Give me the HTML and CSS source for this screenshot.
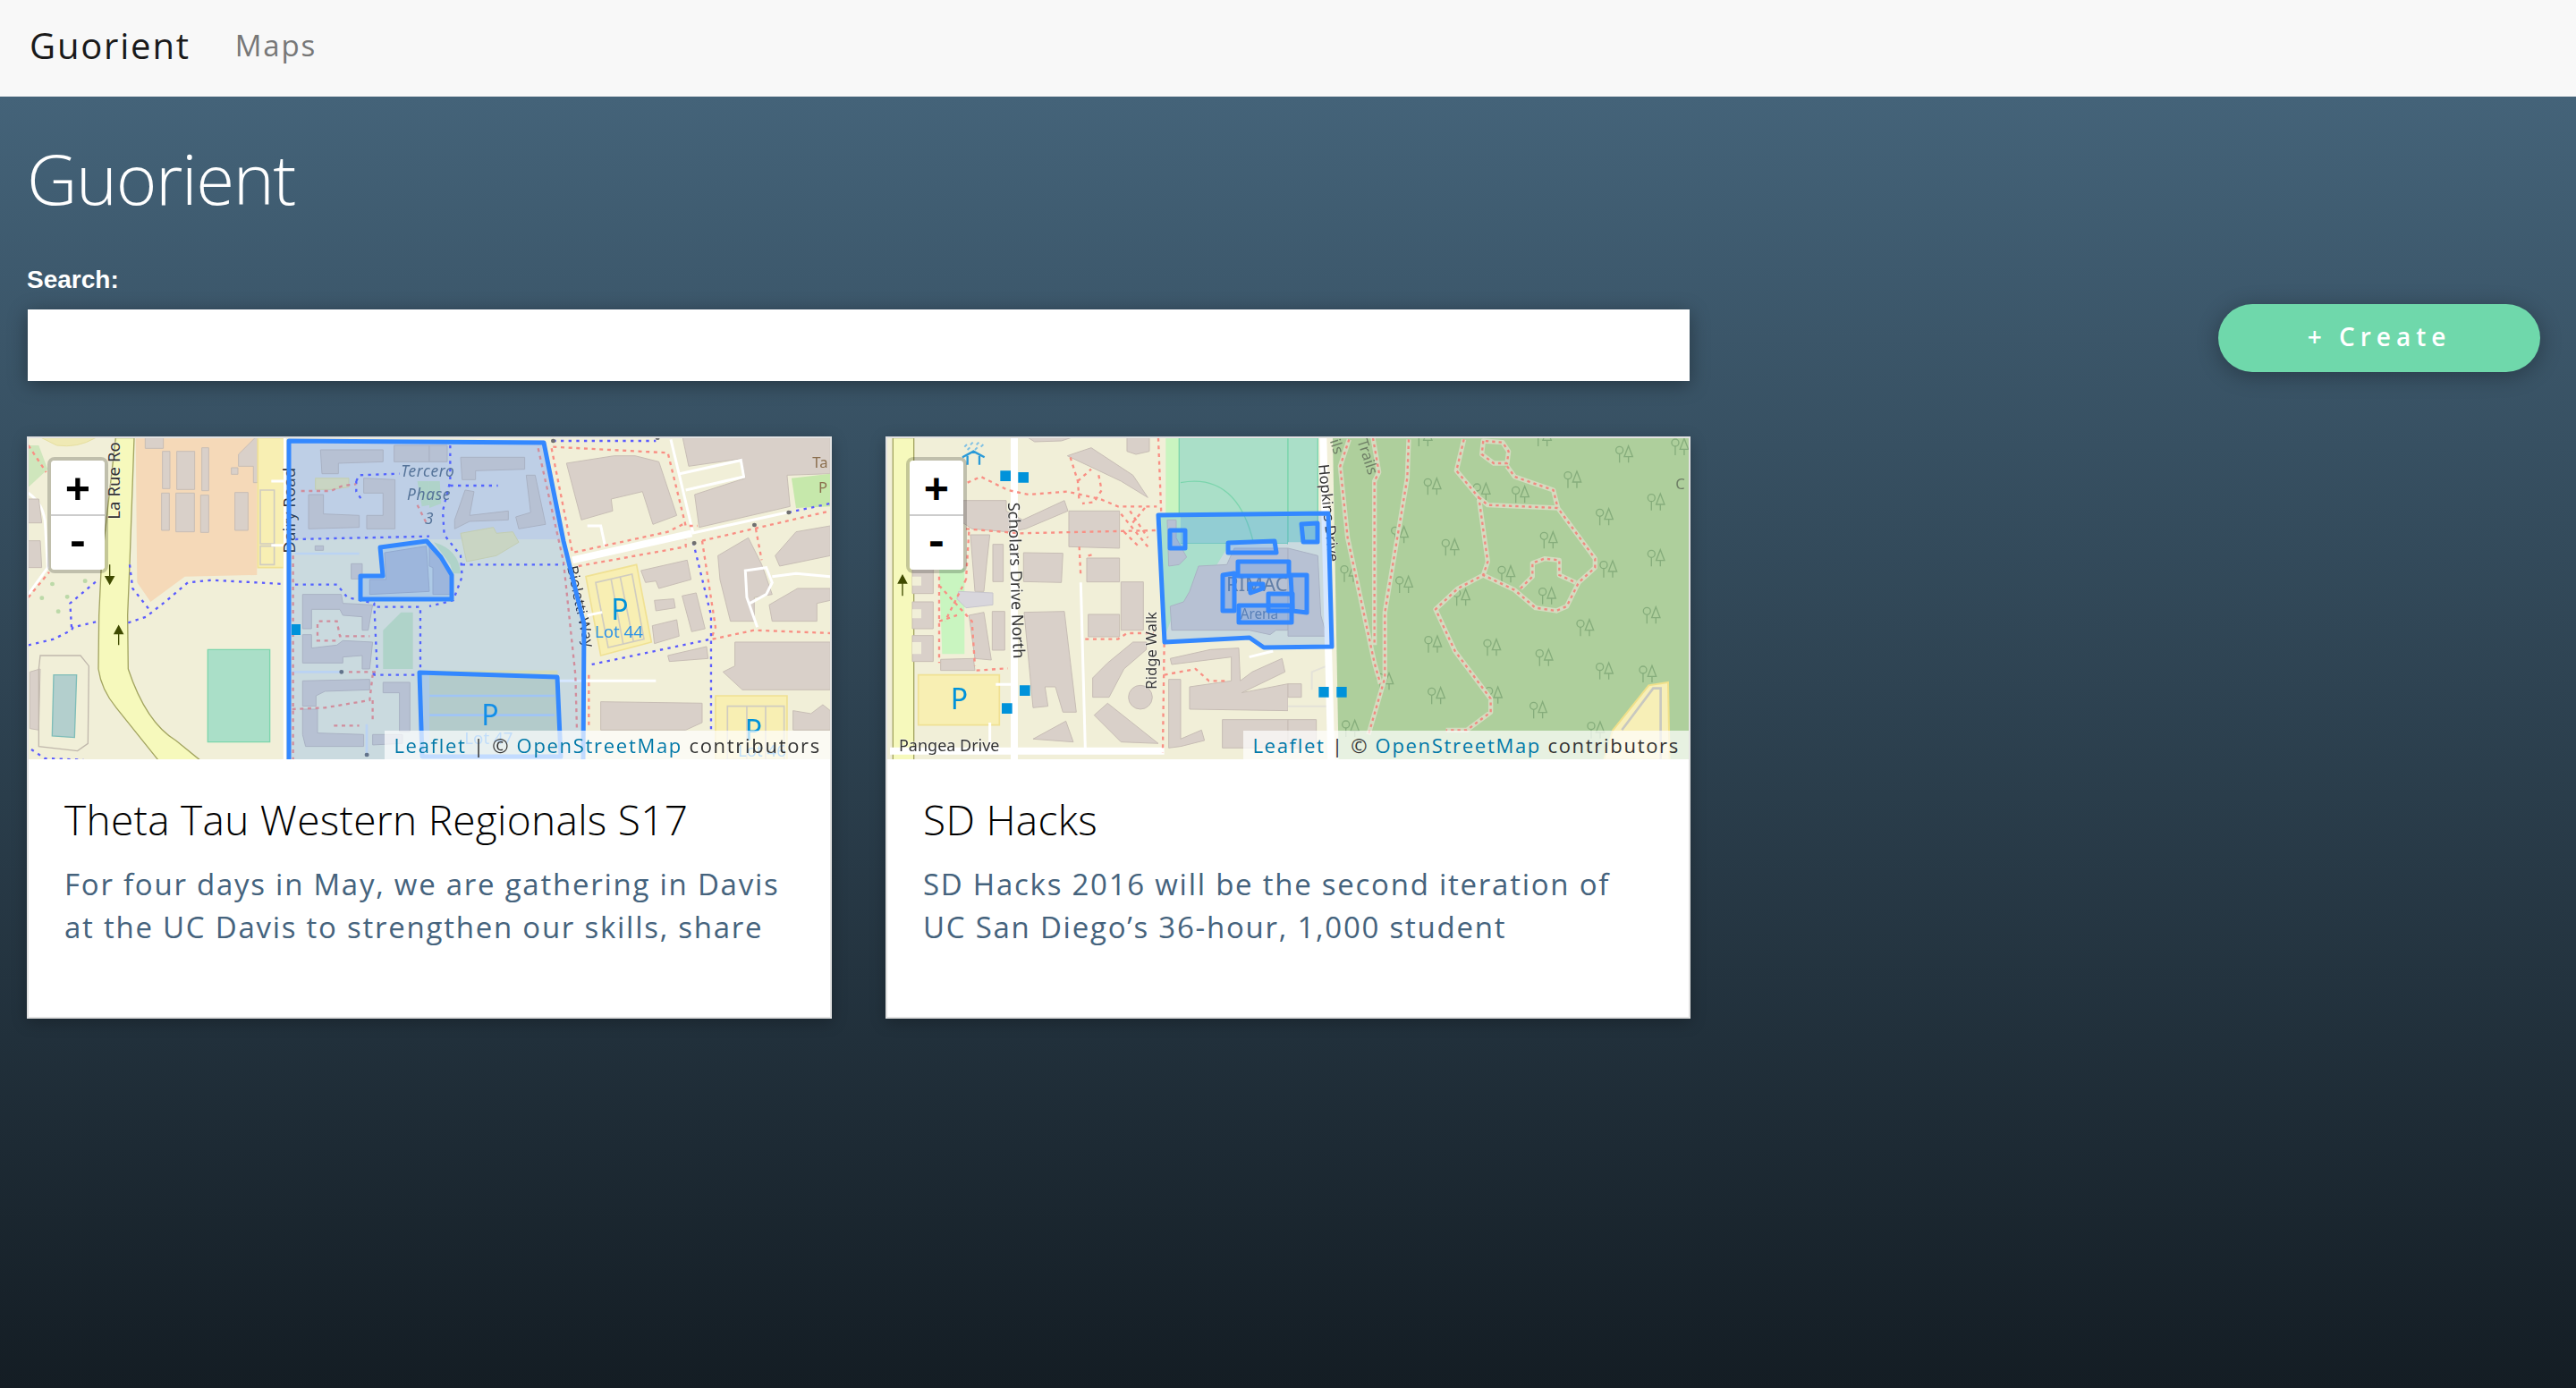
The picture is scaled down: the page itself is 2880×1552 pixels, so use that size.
FILE: index.html
```html
<!DOCTYPE html>
<html lang="en">
<head>
  <meta charset="UTF-8">
  <title>Guorient</title>
  <link rel="stylesheet" href="styles.css">
</head>
<body>

<nav class="navbar">
  <a class="brand" href="#">Guorient</a>
  <a class="nav-link" href="#">Maps</a>
</nav>

<main class="content">
  <h1>Guorient</h1>

  <div class="search-row">
    <form class="search">
      <label for="q">Search:</label>
      <input type="text" id="q">
    </form>
    <button type="button" class="create-btn">+ Create</button>
  </div>

  <div class="cards">

    <!-- Theta Tau -->
    <article class="card">
      <div class="map">
        <svg class="map-svg" viewBox="2 2 896 359" width="896" height="359">
          <symbol id="trees" viewBox="0 0 60 60" overflow="visible">
            <circle cx="14" cy="16" r="12"/><path d="M14 28V58"/>
            <path d="M44 2L58 38H30ZM44 38V58"/>
          </symbol>
          <g class="tiles">
            <rect class="land" width="900" height="362"/>
            <!-- west half -->
            <g transform="scale(.3333)">
              <path class="grass" d="M5 30H40L70 110L5 170Z"/>
              <path class="yard" d="M50 5H230Q170 40 100 30Z"/>
              <path class="retail" d="M365 5H772V465L530 470L415 555L370 490Z"/>
              <path class="bld" d="M397 5H458V40H397ZM455 50H480V175H455ZM503 50H563V178H503ZM587 38H610V182H587ZM452 190H478V315H452ZM500 190H562V320H500ZM583 197H610V322H583ZM698 188H742V315H698ZM710 60L765 5H800V155H760V100H710ZM686 105H708V127H686Z"/>
              <path class="lot" d="M775 5H862V440H775Z"/>
              <path class="lot-in" d="M783 180H830V360H783ZM783 368H830V430H783Z"/>
              <path class="rd" d="M865 5V1085M820 150H865M820 365H865"/>
              <path class="rd" d="M5 190Q60 230 62 300L70 440L5 530"/>
              <path class="bld" d="M5 210H40L50 290H5ZM5 350H45L50 440H5ZM10 790L45 780L40 985L10 980Z"/>
              <path class="major" d="M298 5L250 430L242 600L240 780Q250 850 300 910L440 1085H580L500 1020Q400 960 340 780L338 600L345 430L360 5Z"/>
              <path class="arrow" d="M278 430V490M264 470L278 495L292 470ZM308 640V700M294 662L308 636L322 662Z"/>
              <path class="cyc" d="M5 700L90 680L150 650L155 640L240 620M340 625L400 605L470 550L540 490L620 482L860 495M345 430L355 510L410 580M150 640L145 560L240 480M15 1050L60 1080L190 1085"/>
              <path class="foot" d="M5 30L65 120M5 540L75 455"/>
              <path class="spot" d="M50 542h1M85 495h1M135 538h1M195 485h1M105 587h1"/>
              <path class="track" d="M45 735H180L208 770L205 1030L170 1055L40 1040V780Z"/>
              <path class="pitch" d="M90 800H167L160 1010L85 1005Z"/>
              <path class="field" d="M607 715H815V1025H607Z"/>
              <!-- housing block, the polygon sits on top of this -->
              <path class="housing" d="M880 12H1350V345H880Z"/>
              <path class="bld" d="M985 45H1195V85L1045 90V125H990ZM1232 30H1350V85H1232ZM1130 140L1235 145V310H1140V265H1195V190H1130ZM945 195H995V260L1115 265V305L945 310ZM1088 427H1125V478H1088ZM967 367H995V382H967ZM925 530H1055L1060 560L1160 565L1145 650H1125V605L1060 600L1050 580H955V645H925ZM925 665H955V710L1040 700L1060 685L1160 690L1150 780H1125V735L1060 740V760H925ZM925 820L1150 815V850L1000 855L970 870V905H925ZM925 915H975V995L1130 1000V1040H935L925 1000ZM1195 825H1285V990H1250V860H1195ZM1160 1000H1260V1030L1160 1035Z"/>
              <path class="grass" d="M1195 650L1255 590H1295V780H1195ZM1310 150H1350V230L1325 235Z"/>
              <path class="yard" d="M968 140H1080V170L1020 178H968Z"/>
              <path class="bld" d="M1200 390L1340 368L1350 520L1150 530V480H1205Z"/>
              <path class="rd-thin" d="M900 393H1115M890 790H1050M1140 965V1070"/>
              <path class="cyc" d="M900 345L1350 335M900 497H1040L1075 540L1165 560L1175 780L1160 800M1175 572H1320V780M1160 800H1310M1105 150L1115 130L1250 125M1105 150V185L1125 215"/>
              <path class="foot" d="M920 183H1020L1060 165L1105 160M893 400V1085M1310 230L1340 290M980 620H1040L1050 670H1150M975 630V685H1040M890 915L1000 910L1150 885L1160 800M1160 885V960M1030 970H1115M1080 790H1170"/>
              <path class="gate" d="M1055 790h1M1140 1068h1"/>
              <text class="lab-lg" transform="translate(312 278) rotate(-90)">La Rue Ro</text>
              <text class="lab-lg" transform="translate(900 392) rotate(-90)">Dairy Road</text>
            </g>
            <!-- east half -->
            <g transform="translate(450 0) scale(.3333)">
              <path class="housing" d="M0 12H385L440 345H0Z"/>
              <path class="grass" d="M0 150H35L40 225L0 240ZM15 355Q100 380 105 460H80L70 430Z"/>
              <path class="bld" d="M0 30H60V85H0ZM105 70H320V110L155 115V145H110ZM120 180L150 185L135 265L265 250V280L135 285L85 310V280ZM325 130H355L390 295L300 310L290 270L340 255Z"/>
              <path class="yard" d="M105 325L215 305L225 325L280 320L300 355L225 400L125 420Z"/>
              <path class="bld" d="M0 365L40 405L75 465V530H12V440L0 435Z"/>
              <path class="bld" d="M460 90L620 65H690L770 85L830 265L750 295L715 185L610 210L615 250L510 280ZM850 5H1345V125L1200 130L1210 235L905 305L890 195L1060 140L1045 75L870 100ZM710 450L865 415L878 480L770 510L760 485L725 490ZM755 550L820 545L825 575L760 585ZM848 535L895 525L925 645L880 655ZM748 635L830 615L838 670L755 695ZM968 400L1070 340L1115 430L1150 530L1090 540V620H1010L975 480ZM1160 400L1230 320L1345 300V400L1175 435ZM1140 565L1235 510H1345V550L1300 560V620H1150ZM1025 690H1345V850H1050L985 790L1025 770ZM575 890L915 895V960L860 985H575ZM800 735L930 705L935 745L805 755ZM1220 920L1280 930L1320 900L1345 920V985H1220Z"/>
              <path class="grass-2" d="M1215 140L1345 125V235L1230 240Z"/>
              <path class="lot" d="M525 470L695 430L745 690L575 735Z"/>
              <path class="lot-in" d="M558 490L680 462L720 680L600 708ZM610 480L650 695M640 470L685 690"/>
              <path class="lot" d="M960 870H1200V1085H960Z"/>
              <path class="lot-in" d="M1000 905H1190V1085H1000ZM1065 905V1085M1128 905V1085"/>
              <path class="lot-2" d="M0 785H430L445 1075H0Z"/>
              <path class="rd-wide" d="M480 415L880 325"/>
              <path class="rd" d="M880 325L1200 255M810 10L885 325M840 125L1045 80L1055 135L860 180M530 300H575L590 370M1100 640L1065 540L1060 450L1130 440L1150 490L1130 530L1075 560M1150 470L1230 460L1345 470M530 600L580 590M430 820H760"/>
              <path class="foot" d="M415 35L800 55L860 300L900 300M410 40L480 390L800 320L860 290M500 435L860 370V345M915 350L1345 250M915 350L960 640L945 680M950 680L1090 650L1345 660M1095 310L1115 415M535 800V980M365 40L450 420L490 800L495 985"/>
              <path class="cyc" d="M415 15H760M885 355L945 600V985M545 765L945 680M110 430H450M70 30V150L45 250L50 330L105 400L110 470L80 550L0 570M70 165H230M1205 255L1345 225"/>
              <path class="rd-thin" d="M0 870H420M0 935H420"/>
              <path class="gate" d="M415 15h1M765 5h1M1205 255h1M1090 297h1M888 358h1"/>
              <text class="lab-poi" x="610" y="615">P</text>
              <text class="lab-lot" x="555" y="675">Lot 44</text>
              <text class="lab-poi" x="175" y="968">P</text>
              <text class="lab-lot" x="118" y="1032">Lot 47</text>
              <text class="lab-poi" x="1058" y="1020">P</text>
              <text class="lab-lot" x="1035" y="1075">Lot 46</text>
              <text class="lab-brown" x="1285" y="105">Ta</text>
              <text class="lab-brown" x="1305" y="190">P</text>
              <text class="lab" transform="translate(462 438) rotate(78)">Bioletti Way</text>
            </g>
            <!-- area name runs across both halves -->
            <g transform="scale(.3333)">
              <text class="lab-area" x="1255" y="135">Tercero</text>
              <text class="lab-area" x="1275" y="212">Phase</text>
              <text class="lab-area" x="1335" y="295">3</text>
            </g>
          </g>
          <!-- leaflet polygons -->
          <path class="shape" d="M293 5L578 7L600 117L623 210L622 365H293Z"/>
          <path class="shape" d="M395 124L447 117L463 135L475 155V182H373V156H398Z"/>
          <path class="shape" d="M439 264L593 269L597 358H442Z"/>
          <rect class="sign" x="296" y="210" width="10" height="12"/>
        </svg>
        <div class="zoom-ctl">
          <a href="#" class="zoom-in">+</a>
          <a href="#" class="zoom-out">-</a>
        </div>
        <div class="attribution"><a href="#">Leaflet</a> | © <a href="#">OpenStreetMap</a> contributors</div>
      </div>
      <div class="card-body">
        <h2>Theta Tau Western Regionals S17</h2>
        <p>For four days in May, we are gathering in Davis at the UC Davis to strengthen our skills, share</p>
      </div>
    </article>

    <!-- SD Hacks -->
    <article class="card">
      <div class="map">
        <svg class="map-svg" viewBox="2 2 896 359" width="896" height="359">
          <g class="tiles">
            <rect class="land" width="900" height="362"/>
            <!-- west half -->
            <g transform="scale(.3333)">
              <path class="major" d="M25 5H95V1085H25Z"/>
              <path class="arrow" d="M57 470V535M43 492L57 466L71 492Z"/>
              <path class="grass-3" d="M180 440H265V730H190Z"/>
              <path class="grass-3" d="M940 5H990V270H940Z"/>
              <path class="field" d="M985 5H1350V360H985Z"/>
              <path class="pitch-line" d="M990 155Q1180 120 1235 360"/>
              <path class="land" d="M915 360H1350V705H930Z"/>
              <path class="grass-3" d="M915 265H990V360H1155L1035 555L975 570L930 690Z"/>
              <path class="bld" d="M945 280H975V340L1010 405L985 430L950 435ZM955 570L1000 555L1020 520L1050 435L1145 430L1170 375H1350V650L1310 650L1290 665L1220 650H960Z"/>
              <path class="bld" d="M480 5H620L590 15L500 18ZM610 65L690 38L830 130L880 205L790 150ZM810 5H885V50L840 60L810 50ZM260 215H405V250L460 280L600 215L612 250L470 310L410 320L290 310L260 290ZM615 250H785V375L615 370ZM463 390L595 392L590 490L463 487ZM675 408H785V488H675ZM790 488H865V650H790ZM680 597H785V672H680ZM465 590L600 587L640 925H595L570 840H535L545 905L495 910ZM360 362H395V487H360ZM358 587H400V717H358ZM90 445H160V527H90ZM90 555H160V645H90ZM90 668H160V755H90ZM285 330H350L340 420L330 520H300ZM280 600L330 590L355 750L300 745ZM185 748L295 745L300 785H185ZM955 745L1090 715L1185 710L1190 820L1230 790L1330 745L1340 790L1195 860L1350 830V920L1020 915V840L1160 820V740L960 765ZM695 810L745 760L830 690H875V715L800 780L750 875H695ZM700 935L745 895L915 1030L790 1025ZM495 1015L605 955L630 1025ZM950 815H990V1015L1060 985L1070 1020L990 1040L950 1045ZM1130 950H1350V1045H1130Z"/>
              <circle class="bld" cx="855" cy="875" r="40"/>
              <path class="court" d="M90 470H120V500H90ZM90 580H120V610H90ZM90 690H120V730H90Z"/>
              <path class="plaza" d="M245 520L360 525V565L270 575L240 545Z"/>
              <path class="lot" d="M110 800H382V968H110Z"/>
              <path class="rd" d="M370 832H430M350 960V1040M655 490L670 1045M1220 740L1300 720"/>
              <path class="rd-wide" d="M432 5V1085M15 1055H935"/>
              <path class="foot" d="M275 155L320 135L410 180L480 195L610 185L720 210L780 235L910 235M620 70L645 150L650 220M645 150L690 110M715 130L725 180L700 220L660 225M915 5L925 260M270 310L450 325L910 315M790 260L880 370M820 250L880 340M800 320L850 370M870 240L820 300M650 370L655 470M680 400L700 395M670 680H780L810 660H900M935 695L930 1060M935 800L1040 780L1085 820H1145M180 470V760M180 500L290 620L300 770M270 480L200 620M180 620L240 600M305 785L410 778M280 320L270 480"/>
              <path class="fountain" d="M258 70L295 50L332 70M275 65V95M315 65V95"/>
              <path class="fountain-dots" d="M265 35l8 -8M285 28l8 -8M305 28l8 -8M320 35l8 -8M275 45l8 -8M300 45l8 -8"/>
              <path class="sq" d="M385 115H420V150H385ZM445 120H480V155H445ZM450 835H485V870H450ZM390 895H425V930H390Z"/>
              <text class="lab-poi" x="218" y="915">P</text>
              <text class="lab-road" transform="translate(411 222) rotate(88)">Scholars Drive North</text>
              <text class="lab" transform="translate(908 848) rotate(-90)">Ridge Walk</text>
              <text class="lab-road" x="45" y="1055">Pangea Drive</text>
              <text class="lab-arena" x="1143" y="520">RIMAC</text>
              <text class="lab-arena-sm" x="1190" y="612">Arena</text>
            </g>
            <!-- east half -->
            <g transform="translate(450 0) scale(.3333)">
              <path class="wood" d="M150 5H1345V1085H170Z"/>
              <path class="field" d="M0 5H100V360H0Z"/>
              <path class="land" d="M0 355H125L135 700H0Z"/>
              <path class="bld" d="M0 375L100 400L110 600L130 670H0Z"/>
              <path class="land" d="M0 710H130V1085H0Z"/>
              <path class="bld" d="M0 830H45V875H0ZM0 950H95V1045H0Z"/>
              <path class="rd-thin-2" d="M80 850V790L130 770M0 905H130"/>
              <path class="rd-wide" d="M118 5L135 700L145 1085"/>
              <path class="yard-2" d="M1090 985L1210 835L1275 825L1280 1085H1060Z"/>
              <path class="track-2" d="M1120 985L1225 845H1250V1085"/>
              <g class="tree-set">
                <use href="#trees" x="1098" y="30" width="60" height="60"/>
                <use href="#trees" x="925" y="115" width="60" height="60"/>
                <use href="#trees" x="455" y="138" width="60" height="60"/>
                <use href="#trees" x="620" y="155" width="60" height="60"/>
                <use href="#trees" x="750" y="165" width="60" height="60"/>
                <use href="#trees" x="1205" y="190" width="60" height="60"/>
                <use href="#trees" x="1032" y="240" width="60" height="60"/>
                <use href="#trees" x="345" y="300" width="60" height="60"/>
                <use href="#trees" x="845" y="318" width="60" height="60"/>
                <use href="#trees" x="515" y="342" width="60" height="60"/>
                <use href="#trees" x="175" y="430" width="60" height="60"/>
                <use href="#trees" x="703" y="432" width="60" height="60"/>
                <use href="#trees" x="1045" y="415" width="60" height="60"/>
                <use href="#trees" x="1205" y="378" width="60" height="60"/>
                <use href="#trees" x="360" y="467" width="60" height="60"/>
                <use href="#trees" x="552" y="510" width="60" height="60"/>
                <use href="#trees" x="840" y="505" width="60" height="60"/>
                <use href="#trees" x="1190" y="570" width="60" height="60"/>
                <use href="#trees" x="967" y="612" width="60" height="60"/>
                <use href="#trees" x="457" y="667" width="60" height="60"/>
                <use href="#trees" x="655" y="678" width="60" height="60"/>
                <use href="#trees" x="830" y="712" width="60" height="60"/>
                <use href="#trees" x="1032" y="757" width="60" height="60"/>
                <use href="#trees" x="1177" y="767" width="60" height="60"/>
                <use href="#trees" x="295" y="792" width="60" height="60"/>
                <use href="#trees" x="468" y="840" width="60" height="60"/>
                <use href="#trees" x="660" y="838" width="60" height="60"/>
                <use href="#trees" x="810" y="888" width="60" height="60"/>
                <use href="#trees" x="180" y="950" width="60" height="60"/>
                <use href="#trees" x="1003" y="955" width="60" height="60"/>
                <use href="#trees" x="1285" y="5" width="60" height="60"/>
                <use href="#trees" x="425" y="-25" width="60" height="60"/>
                <use href="#trees" x="825" y="-25" width="60" height="60"/>
              </g>
              <path class="trail" d="M205 10L175 100L200 340L290 760L310 830M285 5L305 120L290 150V700M405 10L400 140L325 590V810L270 1000M590 10L565 115L640 205L670 420L655 465M640 205L670 230L905 240L1030 410V440L975 490L935 570L900 585L830 575L760 515L655 465L570 510L495 580L560 720L680 880V925L600 985H530M655 15L650 60L690 90H735L740 50L720 20ZM735 100L760 135L890 180L905 240M780 510L820 470V425L860 410L910 415V465L965 490"/>
              <path class="trail-dots" d="M205 10L175 100L200 340L290 760L310 830M285 5L305 120L290 150V700M405 10L400 140L325 590V810L270 1000M590 10L565 115L640 205L670 420L655 465M640 205L670 230L905 240L1030 410V440L975 490L935 570L900 585L830 575L760 515L655 465L570 510L495 580L560 720L680 880V925L600 985H530M655 15L650 60L690 90H735L740 50L720 20ZM735 100L760 135L890 180L905 240M780 510L820 470V425L860 410L910 415V465L965 490"/>
              <path class="sq" d="M103 840H137V875H103ZM163 840H197V875H163Z"/>
              <text class="lab" transform="translate(102 95) rotate(84)">Hopkins Drive</text>
              <text class="lab-faint" transform="translate(232 15) rotate(72)">Trails</text>
              <text class="lab-faint" transform="translate(140 15) rotate(72)">ils</text>
              <text class="lab-faint" x="1300" y="178">C</text>
            </g>
          </g>
          <!-- leaflet polygons -->
          <path class="shape" d="M305 88L495 86L499 235L423 236L407 225L312 230Z"/>
          <path class="shape" d="M318 105H335V125H318Z"/>
          <path class="shape" d="M465 98L483 97V118L467 118Z"/>
          <path class="shape" d="M383 119L435 117L437 130H383Z"/>
          <path class="shape" d="M394 140H451V156H394Z"/>
          <path class="shape" d="M377 155L390 153V195H377Z"/>
          <path class="shape" d="M453 155H471V197L455 195Z"/>
          <path class="shape" d="M407 165H422V170L408 175Z"/>
          <path class="shape" d="M428 176H455V195H428Z"/>
          <path class="shape" d="M395 189H454V208H395Z"/>
        </svg>
        <div class="zoom-ctl">
          <a href="#" class="zoom-in">+</a>
          <a href="#" class="zoom-out">-</a>
        </div>
        <div class="attribution"><a href="#">Leaflet</a> | © <a href="#">OpenStreetMap</a> contributors</div>
      </div>
      <div class="card-body">
        <h2>SD Hacks</h2>
        <p>SD Hacks 2016 will be the second iteration of UC San Diego’s 36-hour, 1,000 student</p>
      </div>
    </article>

  </div>
</main>

</body>
</html>
```
FILE: styles.css
```css
html, body {
  height: 100%;
}

body {
  margin: 0;
  min-height: 1552px;
  display: flex;
  flex-direction: column;
  font-family: "Open Sans", "Noto Sans", sans-serif;
  color: #fff;
}

a {
  text-decoration: none;
}

/* navbar */
.navbar {
  height: 108px;
  flex: none;
  display: flex;
  align-items: center;
  gap: 50px;
  padding: 0 33px 8px;
  box-sizing: border-box;
  background-color: #f8f8f8;
}

.brand {
  font-size: 40px;
  color: #1a1a1a;
  letter-spacing: 1.8px;
}

.nav-link {
  font-size: 33px;
  color: #777;
  letter-spacing: 1.8px;
}

/* page */
.content {
  flex: 1;
  padding: 0 30px;
  background: linear-gradient(#446379, #141d24);
}

h1 {
  margin: 37px 0 0;
  font-size: 78px;
  line-height: 108px;
  font-weight: 300;
  letter-spacing: -1.4px;
  color: #fff;
}

.search-row {
  display: flex;
  justify-content: space-between;
  align-items: flex-start;
  margin-top: 43px;
}

.search {
  width: 1858px;
  margin-left: 1px;
}

.search label {
  display: block;
  margin-left: -1px;
  font-family: "Liberation Sans", sans-serif;
  font-size: 28px;
  font-weight: bold;
  line-height: 34px;
  margin-bottom: 16px;
}

.search input {
  display: block;
  width: 100%;
  height: 80px;
  box-sizing: border-box;
  border: 0;
  background: #fff;
  box-shadow: 0 4px 20px rgba(0, 0, 0, 0.35);
}

.create-btn {
  width: 360px;
  height: 76px;
  margin: 44px 10px 0 0;
  padding: 0 0 4px;
  border: 0;
  border-radius: 38px;
  background-color: #6fd8ab;
  box-shadow: 0 4px 24px rgba(0, 0, 0, 0.3);
  font-family: "Open Sans", sans-serif;
  font-size: 28px;
  font-weight: 600;
  letter-spacing: 6px;
  color: #fff;
}

/* cards */
.cards {
  display: flex;
  gap: 60px;
  margin-top: 62px;
}

.card {
  width: 900px;
  height: 651px;
  box-sizing: border-box;
  border: 2px solid #e2e2e2;
  background: #fff;
  box-shadow: 0 4px 16px rgba(0, 0, 0, 0.25);
}

.card-body {
  padding: 0 50px 0 40px;
}

.card h2 {
  margin: 34px 0 0;
  font-size: 46px;
  line-height: 66px;
  font-weight: 300;
  letter-spacing: 0.3px;
  color: #000;
}

.card p {
  margin: 16px 0 0;
  font-size: 33px;
  font-weight: 500;
  line-height: 48px;
  letter-spacing: 1.75px;
  color: #45637d;
}

/* leaflet map */
.map {
  position: relative;
  height: 359px;
  overflow: hidden;
}

.map-svg {
  display: block;
}

.tiles {
  filter: blur(0.5px);
}

.zoom-ctl {
  position: absolute;
  left: 21px;
  top: 21px;
  width: 60px;
  border: 4px solid rgba(0, 0, 0, 0.2);
  border-radius: 8px;
}

.zoom-ctl a {
  display: block;
  height: 60px;
  background: #fff;
  font-family: "Liberation Mono", monospace;
  font-weight: bold;
  font-size: 48px;
  text-align: center;
  color: #000;
}

.zoom-in {
  border-bottom: 2px solid #ccc;
  border-radius: 4px 4px 0 0;
  line-height: 70px;
}

.zoom-out {
  border-radius: 0 0 4px 4px;
  line-height: 62px;
}

.attribution {
  position: absolute;
  right: 0;
  bottom: 0;
  height: 32px;
  padding: 0 10px;
  background: rgba(255, 255, 255, 0.7);
  font-size: 22px;
  line-height: 32px;
  letter-spacing: 1.7px;
  white-space: nowrap;
  color: #333;
}

.attribution a {
  color: #0078a8;
}

/* map drawing, units are 1/3 px inside the tile groups */
.land { fill: #f1efd8; }
.housing { fill: #e2e1e0; }
.bld { fill: #d9d0c9; stroke: #c7bdb5; stroke-width: 3; }
.retail { fill: #f5d9b8; }
.grass { fill: #cfe6bc; }
.grass-2 { fill: #c6e8ab; }
.grass-3 { fill: #c9f5c0; }
.yard { fill: #efe9b4; stroke: #e6dfa0; stroke-width: 3; }
.yard-2 { fill: #f7efb7; stroke: #f0e08a; stroke-width: 6; }
.wood { fill: #aecf9c; }
.lot { fill: #f8efb3; stroke: #f0e193; stroke-width: 5; }
.lot-in { fill: none; stroke: #d0ccc0; stroke-width: 5; }
.lot-2 { fill: #faf2af; }
.major { fill: #f6f9bc; stroke: #a3a560; stroke-width: 4; }
.field { fill: #aadfc8; stroke: #7cd5ad; stroke-width: 4; }
.pitch { fill: #b3cfcd; stroke: #7fbdb8; stroke-width: 4; }
.pitch-line { fill: none; stroke: #7cd5ad; stroke-width: 4; }
.track { fill: none; stroke: #c0b8ac; stroke-width: 4; }
.track-2 { fill: none; stroke: #c8c8c0; stroke-width: 8; }
.court { fill: #f1efd8; }
.plaza { fill: #d8d6dc; stroke: #c7c5cc; stroke-width: 3; }
.rd { fill: none; stroke: #fff; stroke-width: 9; }
.rd-wide { fill: none; stroke: #fff; stroke-width: 24; }
.rd-thin { fill: none; stroke: #dde6f0; stroke-width: 8; }
.rd-thin-2 { fill: none; stroke: #e4e2d8; stroke-width: 6; }
.foot { fill: none; stroke: #f98f84; stroke-width: 7; stroke-dasharray: 12 14; }
.cyc { fill: none; stroke: #5b5bff; stroke-width: 7; stroke-dasharray: 10 16; }
.arrow { fill: #3f4a00; stroke: #3f4a00; stroke-width: 4; }
.spot { fill: none; stroke: #bcd9a8; stroke-width: 14; stroke-linecap: round; }
.gate { fill: none; stroke: #6f6f6f; stroke-width: 14; stroke-linecap: round; }
.fountain { fill: none; stroke: #2a9ad8; stroke-width: 7; }
.fountain-dots { fill: none; stroke: #7fc0e4; stroke-width: 6; }
.sq { fill: #0092da; }
.tree-set { fill: none; stroke: #86ad7c; stroke-width: 4; }
.trail { fill: none; stroke: #d4dcc0; stroke-width: 16; stroke-linejoin: round; }
.trail-dots { fill: none; stroke: #f08a80; stroke-width: 7; stroke-dasharray: 10 12; }

.lab, .lab-lg, .lab-road, .lab-faint, .lab-area, .lab-poi, .lab-lot, .lab-brown, .lab-arena, .lab-arena-sm {
  font-family: "Noto Sans", sans-serif;
}

.lab, .lab-lg, .lab-road {
  fill: #333;
  stroke: #fff;
  stroke-width: 4;
  stroke-opacity: 0.6;
  paint-order: stroke;
}

.lab { font-size: 50px; }
.lab-road { font-size: 54px; }
.lab-lg { font-size: 56px; }
.lab-faint { font-size: 50px; fill: #6f7f66; }
.lab-area { font-size: 52px; font-style: italic; letter-spacing: 2px; fill: #5f7080; }
.lab-poi { font-size: 96px; fill: #0092da; }
.lab-lot { font-size: 56px; fill: #2f93e6; }
.lab-brown { font-size: 50px; fill: #8b6f4e; }
.lab-arena { font-size: 66px; fill: #6f7d92; }
.lab-arena-sm { font-size: 46px; fill: #6f7d92; }

.shape {
  fill: #3388ff;
  fill-opacity: 0.2;
  stroke: #3388ff;
  stroke-width: 5;
  stroke-linejoin: round;
}

.sign { fill: #0092da; }
```
